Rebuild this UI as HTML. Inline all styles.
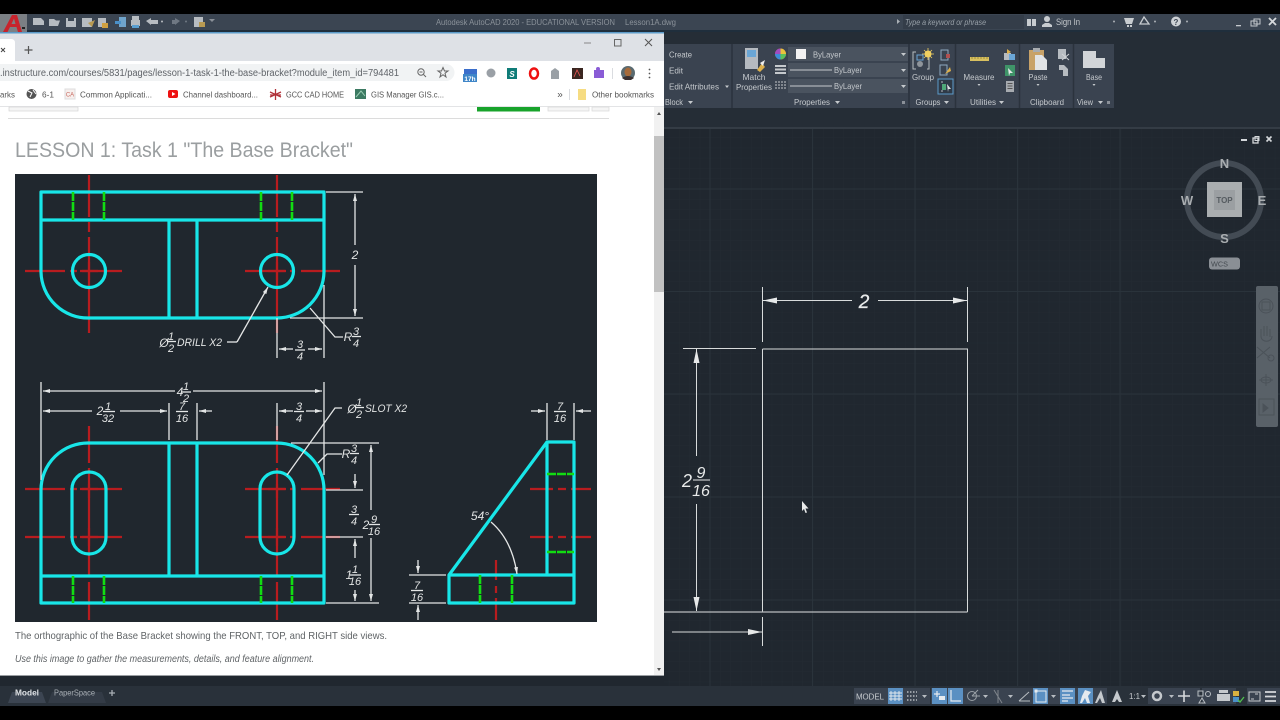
<!DOCTYPE html>
<html><head><meta charset="utf-8"><title>AutoCAD</title>
<style>
html,body{margin:0;padding:0;background:#000;width:1280px;height:720px;overflow:hidden}
svg{position:absolute;left:0;top:0;font-family:"Liberation Sans",sans-serif;filter:blur(.35px)}
.c{fill:none;stroke:#18e6e8;stroke-width:3.200}
.g{stroke:#12dc12;stroke-width:2.600;fill:none;stroke-dasharray:9 1}
.r{stroke:#b81c1f;stroke-width:2.200;fill:none}
.w{stroke:#e4e6e6;stroke-width:1.300;fill:none}
.d1{stroke:#e4e6e6;stroke-width:1.300;fill:none;marker-end:url(#a)}
.t{font-style:italic;fill:#e2e4e4;font-size:12px;text-anchor:middle}
.f{font-style:italic;fill:#e2e4e4;font-size:11px;text-anchor:middle}
.rb{fill:#c5c9cd;font-size:8.500px;text-anchor:middle}
.rl{fill:#c5c9cd;font-size:8.500px}
.bm{fill:#555;font-size:8.600px}
.ic{fill:#b7bcc1}
</style></head><body>
<svg width="1280" height="720" viewBox="0 0 1280 720" xmlns="http://www.w3.org/2000/svg">
<defs>
<marker id="a" markerUnits="userSpaceOnUse" markerWidth="8" markerHeight="5" refX="7" refY="2.500" orient="auto-start-reverse"><path d="M0 0.500L7 2.500L0 4.500Z" fill="#e4e6e6"/></marker>
<marker id="b" markerUnits="userSpaceOnUse" markerWidth="15" markerHeight="8" refX="14" refY="4" orient="auto-start-reverse"><path d="M0 1L14 4L0 7Z" fill="#e6e8e8"/></marker>
<pattern id="mg" x="710" y="86" width="10.270" height="10.270" patternUnits="userSpaceOnUse"><path d="M0 0V10.270M0 0H10.270" stroke="#232b33" stroke-width="1" fill="none"/></pattern>
</defs>

<!-- AutoCAD base -->
<rect x="0" y="14" width="1280" height="692" fill="#20272f"/>
<rect x="0" y="14" width="1280" height="16" fill="#3b4552"/>
<rect x="0" y="30" width="1280" height="99" fill="#252d36"/>
<rect x="0" y="30" width="1280" height="2" fill="#1f2e3c"/>
<rect x="0" y="127" width="1280" height="2" fill="#343c45"/>

<!-- canvas grid -->
<rect x="664" y="129" width="616" height="557" fill="url(#mg)"/>
<g stroke="#2a333b" stroke-width="1" fill="none">
<path d="M710 129V686M812.500 129V686M915 129V686M1017.500 129V686M1120 129V686"/>
<path d="M664 189H1280M664 291.500H1280M664 394H1280M664 497H1280M664 600H1280"/>
</g>

<!-- Title bar -->
<rect x="0" y="14" width="27" height="18" fill="#7b7f84"/>
<path d="M3 32L12 15H17L22 32H18L16.500 27H10L7.500 32ZM11.500 24H15.500L14 18.500Z" fill="#c8232c"/>
<rect x="22" y="27" width="3" height="2" fill="#222"/>
<g class="ic">
<path d="M33 18H41L44 21V25H33Z"/>
<path d="M49 19H54L56 20.500H60L58 26H49Z"/>
<path d="M66 18H76V27H66Z"/><rect x="68" y="18" width="6" height="3" fill="#3b4552"/>
<path d="M82 18H92V27H82Z"/><path d="M88 23L95 20L92 27Z" fill="#b89a52"/>
<path d="M98 18H106V27H98Z"/><rect x="102" y="23" width="6" height="5" fill="#d0a040"/>
<path d="M119 17H126V27H119Z" fill="#6fa4cc"/><rect x="115" y="21" width="6" height="3" fill="#4a90c8"/>
<path d="M131 20H140V26H131Z"/><rect x="132" y="16" width="7" height="4"/><rect x="132" y="25" width="7" height="3" fill="#5a9fd0"/>
<path d="M146 21L151 18V20H158V24H151V25Z"/>
<circle cx="162" cy="21.500" r="1"/>
<path d="M178 21L173 18V20H170V24H173V25Z" fill="#6f7883" transform="translate(2,0)"/>
<circle cx="186" cy="21.500" r="1" fill="#6f7883"/>
<path d="M194 17H203V27H194Z"/><rect x="199" y="22" width="6" height="5" fill="#b89a52"/>
<path d="M209 19H215L212 22Z" fill="#8a9098"/>
</g>
<text x="436" y="25" fill="#8b929a" font-size="8.500" textLength="179" lengthAdjust="spacingAndGlyphs">Autodesk AutoCAD 2020 - EDUCATIONAL VERSION</text>
<text x="625" y="25" fill="#8b929a" font-size="8.500" textLength="51" lengthAdjust="spacingAndGlyphs">Lesson1A.dwg</text>
<path d="M897 19L900 21.500L897 24Z" fill="#aab0b6"/>
<rect x="903" y="15" width="121" height="14" fill="#343d49"/>
<text x="905" y="25" fill="#98a0a8" font-size="8" font-style="italic" textLength="81" lengthAdjust="spacingAndGlyphs">Type a keyword or phrase</text>
<path d="M1027 19H1031V26H1027ZM1032 19H1036V26H1032Z" fill="#c8ccd0"/>
<circle cx="1047" cy="19" r="3" fill="#c8ccd0"/><path d="M1042 27V25L1045 23H1049L1052 25V27Z" fill="#c8ccd0"/>
<text x="1056" y="25" fill="#c5c9cd" font-size="9" textLength="24" lengthAdjust="spacingAndGlyphs">Sign In</text>
<circle cx="1114" cy="21.500" r="1" fill="#aab0b6"/>
<path d="M1124 18H1134L1132 24H1126ZM1127 25H1129V27H1127ZM1130 25H1132V27H1130Z" fill="#c8ccd0"/>
<path d="M1144 17L1149 24H1140Z" fill="none" stroke="#c8ccd0" stroke-width="1.300"/>
<circle cx="1155" cy="21.500" r="1" fill="#aab0b6"/>
<circle cx="1176" cy="21.500" r="5" fill="#cdd1d5"/><text x="1176" y="25" font-size="8" font-weight="bold" text-anchor="middle" fill="#3b4552">?</text>
<circle cx="1187" cy="21.500" r="1" fill="#aab0b6"/>
<rect x="1236" y="25" width="5" height="1.300" fill="#c5c9cd"/>
<rect x="1251" y="21" width="6" height="5" fill="none" stroke="#c5c9cd"/><rect x="1254" y="19" width="6" height="5" fill="none" stroke="#c5c9cd"/>
<path d="M1269 18L1276 25M1276 18L1269 25" stroke="#d5d8db" stroke-width="1.800"/>

<!-- Ribbon panels -->
<rect x="664" y="44" width="450" height="64" fill="#3a4350"/>
<g stroke="#2b333d" stroke-width="1.500"><path d="M732 44V108M909 44V108M955.500 44V108M1019.500 44V108M1073.500 44V108"/></g>
<text class="rl" x="669" y="57.500" textLength="23" lengthAdjust="spacingAndGlyphs">Create</text>
<text class="rl" x="669" y="73.500" textLength="14" lengthAdjust="spacingAndGlyphs">Edit</text>
<text class="rl" x="669" y="89.500" textLength="50" lengthAdjust="spacingAndGlyphs">Edit Attributes</text>
<path d="M725 85.500H729L727 88Z" fill="#c5c9cd"/>
<text class="rl" x="665" y="105" textLength="18" lengthAdjust="spacingAndGlyphs">Block</text>
<path d="M688 101H693L690.500 104Z" fill="#c5c9cd"/>
<rect x="745" y="48" width="13" height="21" fill="#b5bac0"/><rect x="747" y="50" width="9" height="7" fill="#6aa6d6"/><path d="M757 70L762 63L765 67L760 72Z" fill="#dcb04c"/><path d="M760 63L765 60L763 66Z" fill="#eee"/>
<text class="rb" x="754" y="80" textLength="23" lengthAdjust="spacingAndGlyphs">Match</text>
<text class="rb" x="754" y="90" textLength="36" lengthAdjust="spacingAndGlyphs">Properties</text>
<circle cx="780.500" cy="54" r="5.500" fill="#d8663c"/><path d="M780.500 54V48.500A5.500 5.500 0 0 1 786 54Z" fill="#e8c23c"/><path d="M780.500 54H775A5.500 5.500 0 0 1 780.500 48.500Z" fill="#a04cc0"/><path d="M780.500 54V59.500A5.500 5.500 0 0 1 775 54Z" fill="#3c8cd8"/><path d="M780.500 54H786A5.500 5.500 0 0 1 780.500 59.500Z" fill="#5cc05c"/>
<g fill="#c5c9cd"><rect x="775" y="65" width="11" height="2"/><rect x="775" y="68.500" width="11" height="2"/><rect x="775" y="72" width="11" height="2"/></g>
<path d="M775 82H786M775 85H786M775 88H786" stroke="#c5c9cd" stroke-width="1" stroke-dasharray="2 1"/>
<g fill="#4a535f"><rect x="788" y="47" width="120" height="14"/><rect x="788" y="63" width="120" height="14"/><rect x="788" y="79" width="120" height="14"/></g>
<rect x="796" y="49" width="10" height="10" fill="#f2f2f2"/>
<text class="rl" x="813" y="57.500" textLength="28" lengthAdjust="spacingAndGlyphs">ByLayer</text>
<path d="M790 70H832M790 86H832" stroke="#c5c9cd" stroke-width="1"/>
<text class="rl" x="834" y="73" textLength="28" lengthAdjust="spacingAndGlyphs">ByLayer</text>
<text class="rl" x="834" y="89" textLength="28" lengthAdjust="spacingAndGlyphs">ByLayer</text>
<g fill="#c5c9cd"><path d="M901 53H906L903.500 56Z"/><path d="M901 69H906L903.500 72Z"/><path d="M901 85H906L903.500 88Z"/></g>
<text class="rb" x="812" y="105" textLength="36" lengthAdjust="spacingAndGlyphs">Properties</text>
<path d="M835 101H840L837.500 104Z" fill="#c5c9cd"/>
<rect x="902" y="101" width="3" height="3" fill="#8a9098"/>

<!-- Groups -->
<path d="M916 52H913V69H916M927 52H929V69H927" stroke="#b7bcc1" fill="none"/>
<rect x="917" y="55" width="6" height="5" fill="none" stroke="#6aa6d6"/><circle cx="920" cy="64" r="3" fill="#8f959b"/>
<circle cx="928" cy="54" r="3.500" fill="#f0d060"/><path d="M928 48V60M922 54H934M924 50L932 58M932 50L924 58" stroke="#f0d060" stroke-width=".8"/>
<text class="rb" x="923" y="80" textLength="22" lengthAdjust="spacingAndGlyphs">Group</text>
<rect x="941" y="50" width="7" height="10" fill="none" stroke="#8fa8c0"/><rect x="946" y="54" width="4" height="4" fill="#b05050"/>
<rect x="940" y="65" width="7" height="10" fill="none" stroke="#8fa8c0"/><path d="M945 74L950 67L951 71Z" fill="#dcb04c"/>
<rect x="938" y="79" width="15" height="15" fill="#2f3a47" stroke="#5b9ac8"/><path d="M941 82H943M941 91H943" stroke="#b7bcc1"/><rect x="942" y="84" width="4" height="6" fill="#4fa878"/><path d="M947 84L951 89H948.500L948 92Z" fill="#dfe3e6"/>
<text class="rb" x="928" y="105" textLength="25" lengthAdjust="spacingAndGlyphs">Groups</text>
<path d="M944 101H949L946.500 104Z" fill="#c5c9cd"/>
<!-- Utilities -->
<rect x="970" y="57" width="19" height="4" fill="#d8c060"/>
<path d="M972 57V59M975 57V59M978 57V59M981 57V59M984 57V59M987 57V59" stroke="#8a7a30" stroke-width=".7"/>
<text class="rb" x="979" y="80" textLength="31" lengthAdjust="spacingAndGlyphs">Measure</text>
<path d="M977.500 84H980.500L979 86Z" fill="#c5c9cd"/>
<rect x="1004" y="53" width="7" height="7" fill="#b7bcc1"/><rect x="1009" y="54" width="6" height="6" fill="#6aa6d6"/><path d="M1007 49L1011 52L1007 54Z" fill="#dcb04c"/>
<rect x="1005" y="65" width="10" height="11" fill="#3f9468"/><path d="M1008 68L1013 73H1010L1009 76Z" fill="#e5e8ea"/>
<rect x="1006" y="81" width="8" height="11" fill="#a7abb0"/><path d="M1007.500 83.500H1012.500M1007.500 86H1012.500M1007.500 88.500H1012.500" stroke="#555"/>
<text class="rb" x="983" y="105" textLength="26" lengthAdjust="spacingAndGlyphs">Utilities</text>
<path d="M999 101H1004L1001.500 104Z" fill="#c5c9cd"/>
<!-- Clipboard -->
<rect x="1029" y="50" width="15" height="20" fill="#c8a268"/><rect x="1033" y="48" width="7" height="4" fill="#a8acb0"/>
<path d="M1035 55H1042L1047 60V70H1035Z" fill="#e2e4e6"/>
<text class="rb" x="1038" y="80" textLength="19" lengthAdjust="spacingAndGlyphs">Paste</text>
<path d="M1036.500 84H1039.500L1038 86Z" fill="#c5c9cd"/>
<rect x="1058" y="49" width="8" height="10" fill="#b7bcc1"/><path d="M1062 54L1069 60M1069 54L1062 60" stroke="#d0d3d6"/>
<path d="M1059 65H1064L1068 69V76H1063V70H1059Z" fill="#b7bcc1"/>
<text class="rb" x="1047" y="105" textLength="34" lengthAdjust="spacingAndGlyphs">Clipboard</text>
<!-- View -->
<path d="M1083 51H1096V58H1105V68H1083Z" fill="#d2d5d8"/>
<text class="rb" x="1094" y="80" textLength="16" lengthAdjust="spacingAndGlyphs">Base</text>
<path d="M1092.500 84H1095.500L1094 86Z" fill="#c5c9cd"/>
<text class="rb" x="1085" y="105" textLength="16" lengthAdjust="spacingAndGlyphs">View</text>
<path d="M1098 101H1103L1100.500 104Z" fill="#c5c9cd"/>
<rect x="1107" y="101" width="3" height="3" fill="#8a9098"/>

<!-- CAD drawing -->
<g stroke="#d8dbdb" fill="none" stroke-width="1">
<path d="M762.500 349H967.500V612"/>
<path d="M762.500 349V612"/>
<path d="M664 612H967.500" stroke-width="1.300" stroke="#b9bdbf"/>
<path d="M762.500 287V342M967.500 287V342M683 348.500H756M762.500 617V646"/>
<path d="M852 300.500H763" marker-end="url(#b)"/>
<path d="M878 300.500H967" marker-end="url(#b)"/>
<path d="M696.500 456V349" marker-end="url(#b)"/>
<path d="M696.500 504V611" marker-end="url(#b)"/>
<path d="M672 632H762" marker-end="url(#b)"/>
</g>
<text x="864" y="308" fill="#e8eaea" font-size="19" font-style="italic" stroke="#e8eaea" stroke-width=".3" text-anchor="middle">2</text>
<text x="687" y="487" fill="#e8eaea" font-size="18" font-style="italic" text-anchor="middle">2</text>
<text x="701" y="478" fill="#e8eaea" font-size="16" font-style="italic" text-anchor="middle">9</text>
<path d="M693 480H710" stroke="#e8eaea" stroke-width="1"/>
<text x="701" y="496" fill="#e8eaea" font-size="16" font-style="italic" text-anchor="middle">16</text>
<path d="M802 501V511L804 509L805.500 513L807 512.500L805.500 508.500H808.500Z" fill="#e8eaea"/>

<!-- ViewCube -->
<path d="M1241 140H1247" stroke="#d5d8db" stroke-width="2"/>
<rect x="1253" y="138" width="5" height="5" fill="none" stroke="#d5d8db" stroke-width="1.300"/><rect x="1255" y="136.500" width="4" height="4" fill="none" stroke="#d5d8db"/>
<path d="M1266.500 136.500L1271.500 141.500M1271.500 136.500L1266.500 141.500" stroke="#d5d8db" stroke-width="1.600"/>
<circle cx="1224" cy="200" r="37" fill="none" stroke="#434b54" stroke-width="6"/>
<g fill="#a9adb0" font-weight="bold" font-size="13" text-anchor="middle"><text x="1224.500" y="168">N</text><text x="1224.500" y="243">S</text><text x="1187" y="205">W</text><text x="1262" y="205">E</text></g>
<rect x="1207" y="182" width="35" height="35" fill="#aaaeb0"/><rect x="1214" y="190" width="21" height="20" fill="#9b9fa2"/>
<text x="1224.500" y="203" fill="#555b60" font-size="8" font-weight="bold" text-anchor="middle">TOP</text>
<rect x="1209" y="257.500" width="31" height="12" rx="3" fill="#8a8f95"/>
<text x="1211" y="266.500" fill="#444a50" font-size="7.500" textLength="17" lengthAdjust="spacingAndGlyphs">WCS</text>
<!-- Nav bar -->
<rect x="1256" y="286" width="22" height="141" rx="2" fill="#596168"/>
<g stroke="#4b5259" fill="none" stroke-width="1">
<circle cx="1266" cy="306" r="7"/><rect x="1262" y="302" width="8" height="8"/>
<path d="M1261 337V329M1264 336V326M1267 336V326M1270 337V329M1261 336C1261 343 1272 343 1272 336"/>
<path d="M1257 347L1270 358M1270 347L1257 358"/><circle cx="1271" cy="358" r="3"/>
<path d="M1266 374V386M1259 380H1273"/><ellipse cx="1266" cy="380" rx="5" ry="3"/>
<rect x="1259" y="399" width="15" height="16"/><path d="M1263 404L1268 408L1263 412Z" fill="#4b5259"/>
</g>

<!-- Status bar -->
<rect x="0" y="686" width="1280" height="20" fill="#29313a"/>
<path d="M8 703L12 692H42L46 703Z" fill="#3c4552"/>
<path d="M48 703L52 692H102L106 703Z" fill="#333b46"/>
<text x="15" y="695.500" fill="#dfe2e5" font-size="8.500" font-weight="bold" textLength="24" lengthAdjust="spacingAndGlyphs">Model</text>
<text x="54" y="695.500" fill="#a9afb5" font-size="8.500" textLength="41" lengthAdjust="spacingAndGlyphs">PaperSpace</text>
<path d="M109 693H115M112 690V696" stroke="#a9afb5" stroke-width="1.300"/>
<g fill="#3a4350">
<rect x="854" y="688" width="76" height="16"/><rect x="931" y="688" width="36" height="16"/><rect x="967" y="688" width="50" height="16"/>
<rect x="1017" y="688" width="90" height="16"/><rect x="1148" y="688" width="52" height="16"/><rect x="1202" y="688" width="34" height="16"/><rect x="1247" y="688" width="33" height="16"/>
</g>
<text x="856" y="699.500" fill="#c8ccd0" font-size="8.500" textLength="28" lengthAdjust="spacingAndGlyphs">MODEL</text>
<g fill="#5b90c2"><rect x="888" y="688" width="15" height="16"/><rect x="932" y="688" width="15" height="16"/><rect x="948" y="688" width="15" height="16"/><rect x="1033" y="688" width="15" height="16"/><rect x="1060" y="688" width="15" height="16"/><rect x="1078" y="688" width="15" height="16"/></g>
<path d="M891 691V701M895 691V701M899 691V701M889 693H902M889 696H902M889 699H902" stroke="#e5eaef" stroke-width=".9"/>
<path d="M907 692H917M907 696H917M907 700H917" stroke="#b7bcc1" stroke-width="1.500" stroke-dasharray="1.500 1.500"/>
<path d="M922 695H927L924.500 698Z" fill="#b7bcc1"/>
<path d="M934 694H940M937 691V697" stroke="#e5eaef" stroke-width="1.200"/><rect x="939" y="696" width="6" height="4" fill="#e5eaef"/>
<path d="M951 690V701H961" stroke="#e5eaef" stroke-width="1.200" fill="none"/>
<circle cx="972" cy="696" r="4.500" fill="none" stroke="#9aa0a6"/><path d="M972 696H980M972 696L978 690" stroke="#9aa0a6"/>
<path d="M983 695H988L985.500 698Z" fill="#b7bcc1"/>
<path d="M994 690L1002 703M998 690V703" stroke="#80868c"/><path d="M1008 695H1013L1010.500 698Z" fill="#b7bcc1"/>
<path d="M1019 701L1029 692M1019 701H1030" stroke="#b7bcc1"/>
<rect x="1036" y="691" width="10" height="11" fill="none" stroke="#e5eaef"/><rect x="1034.500" y="689.500" width="3" height="3" fill="#e5eaef"/>
<path d="M1051 695H1056L1053.500 698Z" fill="#b7bcc1"/>
<path d="M1062 691H1073M1062 695H1070M1062 698H1073M1062 701H1068" stroke="#e5eaef" stroke-width="1.300"/>
<path d="M1085 690L1091 692L1088 696L1090 703H1087L1085 698L1082 703H1080L1082 696Z" fill="#e5eaef"/>
<path d="M1101 690L1105 703H1102L1100 698L1097 703H1095L1098 696Z" fill="#c5c9cd"/>
<path d="M1117 690L1122 702H1119L1117 699L1115 702H1112Z" fill="#c5c9cd"/>
<text x="1129" y="699" fill="#c5c9cd" font-size="8.500" textLength="11" lengthAdjust="spacingAndGlyphs">1:1</text>
<path d="M1141 695H1146L1143.500 698Z" fill="#b7bcc1"/>
<circle cx="1157" cy="696" r="4" fill="none" stroke="#c5c9cd" stroke-width="2.500"/>
<path d="M1169 695H1174L1171.500 698Z" fill="#b7bcc1"/>
<path d="M1184 690.500V702M1178 696H1190" stroke="#d5d8db" stroke-width="1.600"/>
<rect x="1198" y="691" width="5" height="5" fill="none" stroke="#b7bcc1"/><circle cx="1208" cy="694" r="2.500" fill="none" stroke="#b7bcc1"/><path d="M1202 698L1205 703H1199Z" fill="none" stroke="#b7bcc1"/>
<path d="M1217 694H1230V701H1217Z" fill="#c5c9cd"/><rect x="1219" y="690" width="9" height="3" fill="#c5c9cd"/>
<rect x="1233" y="691" width="6" height="5" fill="#d8b040"/><rect x="1233" y="697" width="6" height="5" fill="#4a90c8"/><path d="M1238 700L1240 702L1244 697" stroke="#50c050" fill="none" stroke-width="1.300"/>
<rect x="1249" y="692" width="11" height="9" fill="none" stroke="#c5c9cd"/><path d="M1255 694H1258M1251 699H1254" stroke="#c5c9cd"/>
<path d="M1265 692H1276M1265 696.500H1276M1265 701H1276" stroke="#d5d8db" stroke-width="1.700"/>

<!-- Chrome window -->
<rect x="0" y="32" width="664" height="644" fill="#fff"/>
<rect x="0" y="32" width="664" height="1.500" fill="#5b9ac8"/>
<rect x="0" y="33.500" width="664" height="27.500" fill="#dee1e6"/>
<path d="M0 39H11Q15 39 15 43V61H0Z" fill="#fff"/>
<path d="M1 48L5 52M5 48L1 52" stroke="#444" stroke-width="1"/>
<path d="M28.500 46V54M24.500 50H32.500" stroke="#555" stroke-width="1.200"/>
<path d="M584 43H591" stroke="#888" stroke-width="1"/>
<rect x="614.500" y="39.500" width="6.500" height="6.500" fill="none" stroke="#666"/>
<path d="M645 39L652 46M652 39L645 46" stroke="#555" stroke-width="1"/>
<rect x="0" y="61" width="664" height="23" fill="#fff"/>
<path d="M0 64H446A8.500 8.500 0 0 1 446 81H0Z" fill="#f1f3f4"/>
<text x="0" y="76" fill="#5f6368" font-size="10" textLength="399" lengthAdjust="spacingAndGlyphs">.instructure.com/courses/5831/pages/lesson-1-task-1-the-base-bracket?module_item_id=794481</text>
<circle cx="421" cy="72" r="3.200" fill="none" stroke="#666"/><path d="M423.500 74.500L426 77M419.500 72H422.500" stroke="#666"/>
<path d="M443 67.500L444.500 71H448L445 73.200L446 77L443 74.700L440 77L441 73.200L438 71H441.500Z" fill="none" stroke="#666"/>
<rect x="464" y="69" width="13" height="5" fill="#3b6ecb"/><rect x="463" y="74" width="14" height="8" fill="#3f86c8"/><text x="470" y="81" fill="#fff" font-size="6.500" font-weight="bold" text-anchor="middle">17h</text>
<circle cx="491" cy="73" r="4.500" fill="#9aa0a6"/>
<rect x="507" y="68" width="10" height="11" fill="#0f7c78"/><text x="512" y="77" fill="#fff" font-size="8" font-style="italic" font-weight="bold" text-anchor="middle">S</text>
<ellipse cx="534" cy="73.500" rx="4" ry="5" fill="none" stroke="#e11" stroke-width="2.500"/>
<path d="M555 68L559 71V79H551V71Z" fill="#9aa0a6"/>
<rect x="572" y="68" width="11" height="11" fill="#3a2620"/><path d="M574 77L577 70L580 76" stroke="#e55" fill="none" stroke-width=".8"/>
<path d="M594 70H604V78H594Z" fill="#8a5cd6"/><circle cx="598" cy="69" r="2" fill="#8a5cd6"/>
<path d="M612.500 68V79" stroke="#dadce0"/>
<circle cx="628" cy="73" r="7" fill="#5a6a70"/><ellipse cx="628" cy="72" rx="3.500" ry="4.500" fill="#a66a3a"/><path d="M622 78Q628 74 634 78L631 80H625Z" fill="#3a3030"/>
<g fill="#555"><circle cx="649.500" cy="69.500" r=".9"/><circle cx="649.500" cy="73.500" r=".9"/><circle cx="649.500" cy="77.500" r=".9"/></g>
<rect x="0" y="84" width="664" height="22" fill="#fff"/>
<rect x="0" y="106" width="664" height="1" fill="#e3e4e6"/>
<text class="bm" x="0" y="97.500" textLength="15" lengthAdjust="spacingAndGlyphs">arks</text>
<circle cx="31.500" cy="94" r="5" fill="#555"/><path d="M28 91L32 93L30 97M33 90L36 94" stroke="#fff" fill="none"/>
<text class="bm" x="42" y="97.500" textLength="12" lengthAdjust="spacingAndGlyphs">6-1</text>
<rect x="65" y="89" width="10" height="10" fill="#f7f0ee" stroke="#ddd"/><text x="70" y="96.500" fill="#c76a60" font-size="6" text-anchor="middle">CA</text>
<text class="bm" x="80" y="97.500" textLength="72" lengthAdjust="spacingAndGlyphs">Common Applicati...</text>
<rect x="168" y="90" width="10" height="8" rx="2" fill="#e11"/><path d="M172 92L175.500 94L172 96Z" fill="#fff"/>
<text class="bm" x="183" y="97.500" textLength="75" lengthAdjust="spacingAndGlyphs">Channel dashboard...</text>
<path d="M275.500 89V100M270 92L281 97M281 92L270 97M270 95H281" stroke="#b03038" stroke-width="1.300"/>
<text class="bm" x="286" y="97.500" textLength="58" lengthAdjust="spacingAndGlyphs">GCC CAD HOME</text>
<rect x="355" y="89" width="11" height="10" fill="#3c7a62"/><path d="M356 97L361 91L365 96" stroke="#9ccfb5" fill="none"/>
<text class="bm" x="371" y="97.500" textLength="73" lengthAdjust="spacingAndGlyphs">GIS Manager  GIS.c...</text>
<text x="560" y="97.500" fill="#555" font-size="10" text-anchor="middle">»</text>
<path d="M569.500 89V100" stroke="#dadce0"/>
<path d="M578 89H586V100H578Z" fill="#f6dc82"/>
<text class="bm" x="592" y="97.500" textLength="62" lengthAdjust="spacingAndGlyphs">Other bookmarks</text>

<!-- Page -->
<rect x="9" y="107" width="69" height="4" fill="#f5f5f5" stroke="#d5d5d5" stroke-width=".7"/>
<rect x="477" y="107" width="63" height="4.500" fill="#18a32b"/>
<rect x="548" y="107" width="41" height="4" fill="#f5f5f5" stroke="#d8d8d8" stroke-width=".7"/>
<rect x="592" y="107" width="17" height="4" fill="#f5f5f5" stroke="#d8d8d8" stroke-width=".7"/>
<rect x="8" y="118" width="601" height="1" fill="#dcdcdc"/>
<text x="15" y="157" fill="#9a9ea0" font-size="21" textLength="338" lengthAdjust="spacingAndGlyphs">LESSON 1: Task 1 "The Base Bracket"</text>

<rect x="654" y="107" width="10" height="569" fill="#f1f1f1"/>
<rect x="654" y="136" width="10" height="156" fill="#c1c1c1"/>
<path d="M657 115L659 112L661 115Z" fill="#555"/><path d="M657 668L659 671L661 668Z" fill="#555"/>

<!-- Reference image -->
<rect x="15" y="174" width="582" height="448" fill="#20272e"/>
<!-- Top view -->
<g class="r">
<path d="M89 175V217M89 222V232M89 237V333M277 175V217M277 222V232M277 237V333"/>
<path d="M25 271H65M70 271H77M82 271H122M245 271H285M290 271H295M301 271H340"/>
</g>
<g class="c">
<path d="M41 192H324V272A47 47 0 0 1 277 318H89A47 47 0 0 1 41 272Z" stroke-linejoin="round"/>
<path d="M41 220H324M169 220V318M197 220V318"/>
<circle cx="89" cy="271" r="16.500"/><circle cx="277" cy="271" r="16.500"/>
</g>
<path class="g" d="M73 192V220M104 192V220M261 192V220M292 192V220"/>
<path class="r" d="M89 262V280M80 271H98M277 262V280M268 271H286"/>
<path class="w" d="M326 192H363M290 318H363M277 318V358M324 285V358"/>
<path class="d1" d="M355 245V194"/><path class="d1" d="M355 265V316"/>
<path class="d1" d="M293 349H279"/><path class="d1" d="M308 349H322"/>
<path class="d1" d="M237 342L268 287"/><path class="w" d="M227 342H237"/>
<path class="w" d="M310 308L335 337H343"/>
<text class="t" x="355" y="259">2</text>
<text class="f" x="300" y="348">3</text><path class="w" d="M295 350H305" stroke-width="1"/><text class="f" x="300" y="360">4</text>
<text class="t" x="164" y="347">Ø</text>
<text class="f" x="171" y="340">1</text><path class="w" d="M167 341.500H176" stroke-width="1"/><text class="f" x="171" y="352">2</text>
<text x="177" y="346" fill="#e2e4e4" font-size="11" font-style="italic" textLength="45" lengthAdjust="spacingAndGlyphs">DRILL X2</text>
<text class="t" x="348" y="341">R</text>
<text class="f" x="356" y="335">3</text><path class="w" d="M352 336.500H361" stroke-width="1"/><text class="f" x="356" y="347">4</text>

<!-- Front view -->
<g class="r">
<path d="M89 426V463M89 468V480M89 484V577M89 582V620M277 426V463M277 468V480M277 484V577M277 582V620"/>
<path d="M25 489H65M70 489H77M82 489H122M245 489H285M290 489H295M301 489H340"/>
<path d="M25 537H65M70 537H77M82 537H122M245 537H285M290 537H295M301 537H340"/>
</g>
<g class="c">
<path d="M41 603V490A47 47 0 0 1 89 443H277A47 47 0 0 1 324 490V603Z" stroke-linejoin="round"/>
<path d="M41 576H324M169 443V576M197 443V576"/>
<path d="M72 489A17 17 0 0 1 106 489V537A17 17 0 0 1 72 537Z"/>
<path d="M260 489A17 17 0 0 1 294 489V537A17 17 0 0 1 260 537Z"/>
</g>
<path class="g" d="M73 576V603M104 576V603M261 576V603M292 576V603"/>
<path class="r" d="M89 480V498M80 489H98M89 528V546M80 537H98M277 480V498M268 489H286M277 528V546M268 537H286"/>
<path class="w" d="M41 382V480M324 382V475M169 403V440M197 403V440M277 403V440"/>
<path class="w" d="M291 443H379M326 490H363M326 537H363M326 603H379"/>
<path class="d1" d="M175 391H43"/><path class="d1" d="M193 391H322"/>
<path class="d1" d="M92 411H43"/><path class="d1" d="M120 411H167"/>
<path class="d1" d="M212 411H199"/>
<path class="d1" d="M293 411H279"/><path class="d1" d="M306 411H322"/>
<path class="d1" d="M355 474V488"/><path class="d1" d="M355 558V539"/><path class="d1" d="M355 590V601"/>
<path class="d1" d="M371 510V445"/><path class="d1" d="M371 538V601"/>
<path class="w" d="M287 475L335 408H342"/>
<path class="w" d="M318 463L327 454H342"/>
<text class="t" x="180" y="396">4</text>
<text class="f" x="186" y="390">1</text><path class="w" d="M181 392H191" stroke-width="1"/><text class="f" x="186" y="402">2</text>
<text class="t" x="100" y="415">2</text>
<text class="f" x="108" y="410">1</text><path class="w" d="M103 411.500H115" stroke-width="1"/><text class="f" x="108" y="422">32</text>
<text class="f" x="182" y="410">7</text><path class="w" d="M176 411.500H188" stroke-width="1"/><text class="f" x="182" y="422">16</text>
<text class="f" x="299" y="410">3</text><path class="w" d="M294 411.500H304" stroke-width="1"/><text class="f" x="299" y="422">4</text>
<text class="t" x="352" y="413">Ø</text>
<text class="f" x="359" y="406">1</text><path class="w" d="M355 407.500H364" stroke-width="1"/><text class="f" x="359" y="418">2</text>
<text x="365" y="412" fill="#e2e4e4" font-size="11" font-style="italic" textLength="42" lengthAdjust="spacingAndGlyphs">SLOT X2</text>
<text class="t" x="346" y="458">R</text>
<text class="f" x="354" y="452">3</text><path class="w" d="M350 453.500H359" stroke-width="1"/><text class="f" x="354" y="464">4</text>
<text class="f" x="354" y="513">3</text><path class="w" d="M349 514.500H359" stroke-width="1"/><text class="f" x="354" y="525">4</text>
<text class="t" x="366" y="529">2</text>
<text class="f" x="374" y="523">9</text><path class="w" d="M369 524.500H380" stroke-width="1"/><text class="f" x="374" y="535">16</text>
<text class="t" x="349" y="579">1</text>
<text class="f" x="355" y="573">1</text><path class="w" d="M350 575H361" stroke-width="1"/><text class="f" x="355" y="585">16</text>

<!-- Side view -->
<g class="r">
<path d="M530 489H553M558 489H566M571 489H591M530 537H553M558 537H566M571 537H591"/>
<path d="M496 560V580M496 586V593M496 598V620"/>
</g>
<g class="c" stroke-linejoin="round">
<path d="M547 442H574V603H449V575Z"/>
<path d="M449 575H574M547 442V575"/>
</g>
<path class="g" d="M547 474H574M547 552H574M480 575V603M512 575V603"/>
<path class="d1" d="M491 522Q512 540 517 574"/>
<path class="w" d="M547 403V440M574 403V440M409 575H446M409 603H446"/>
<path class="d1" d="M531 411H545"/><path class="d1" d="M591 411H576"/>
<path class="d1" d="M418 560V573"/><path class="d1" d="M418 620V605"/>
<text class="f" x="560" y="410">7</text><path class="w" d="M554 411.500H566" stroke-width="1"/><text class="f" x="560" y="422">16</text>
<text class="f" x="417" y="589">7</text><path class="w" d="M411 590.500H423" stroke-width="1"/><text class="f" x="417" y="601">16</text>
<text class="t" x="480" y="520">54°</text>

<text x="15" y="639" fill="#5f6366" font-size="10.500" textLength="372" lengthAdjust="spacingAndGlyphs">The orthographic of the Base Bracket showing the FRONT, TOP, and RIGHT side views.</text>
<text x="15" y="662" fill="#5f6366" font-size="10" font-style="italic" textLength="299" lengthAdjust="spacingAndGlyphs">Use this image to gather the measurements, details, and feature alignment.</text>
<rect x="0" y="675" width="664" height="1" fill="#9a9ea2"/>
</svg>
</body></html>
